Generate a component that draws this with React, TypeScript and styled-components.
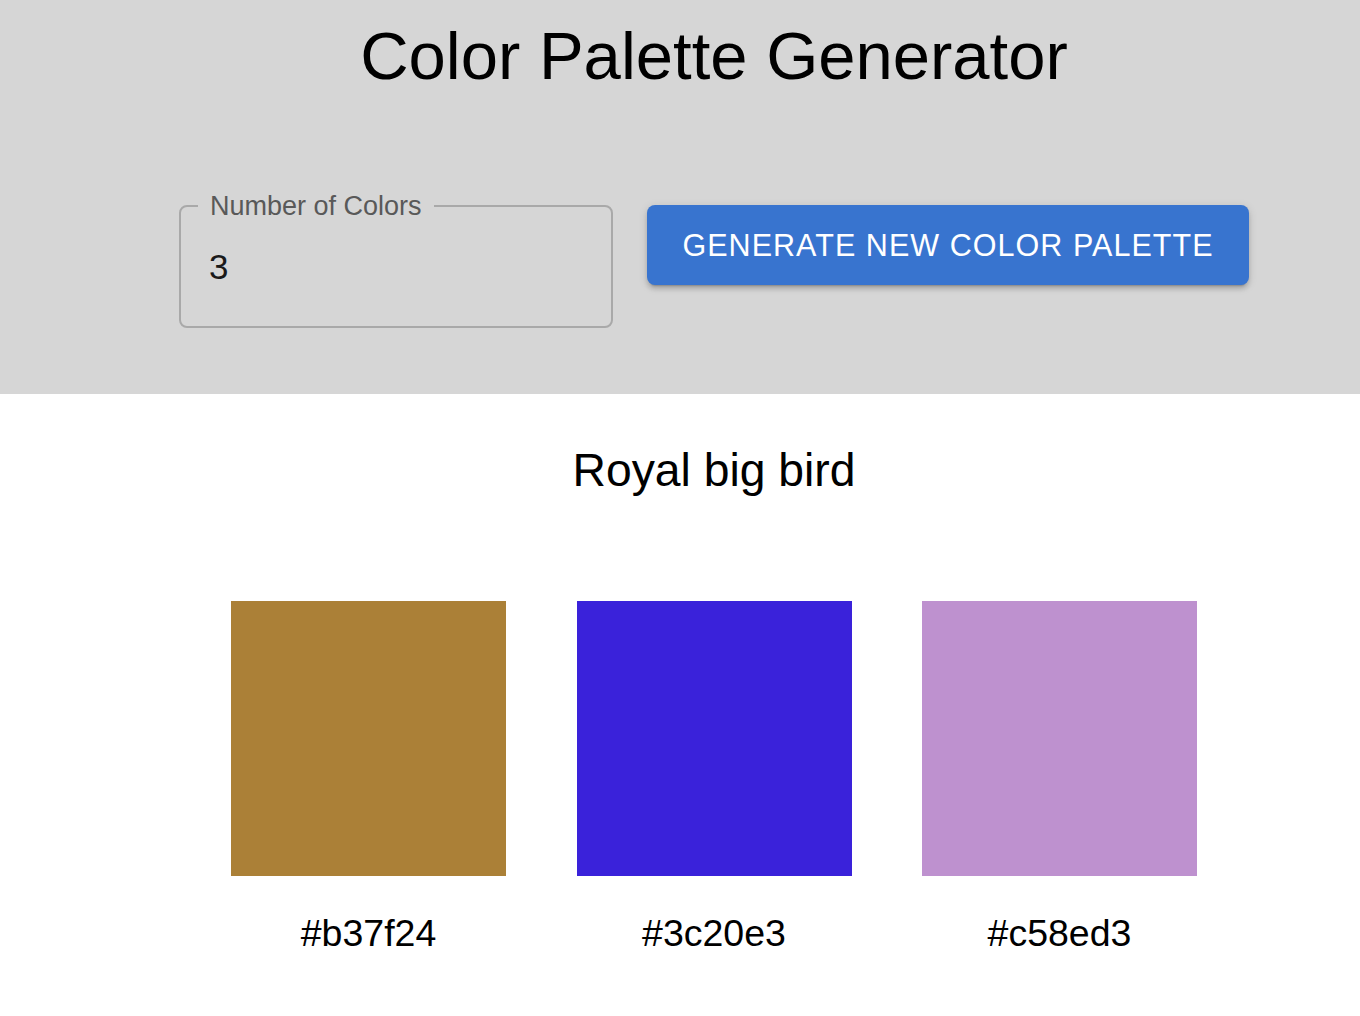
import React from "react";
import styled, { createGlobalStyle } from "styled-components";

const Global = createGlobalStyle`
  html, body { margin: 0; padding: 0; background: #ffffff; }
  body { font-family: "Liberation Sans", Arial, Helvetica, sans-serif; color: #000; }
`;

const Header = styled.header`
  background: #d6d6d6;
  padding: 16px 0 66px 68px;
  display: flex;
  flex-direction: column;
  align-items: center;
`;

const Title = styled.h1`
  margin: 0;
  font-size: 67px;
  line-height: 80px;
  font-weight: 400;
  color: #000;
`;

const Controls = styled.div`
  margin-top: 96px;
  display: flex;
  align-items: flex-start;
  gap: 34px;
`;

const Field = styled.fieldset`
  margin: 0;
  width: 434px;
  box-sizing: border-box;
  padding: 0 17px 14px;
  border: 2px solid #a9a9a9;
  border-radius: 8px;
`;

const Legend = styled.legend`
  padding: 0 12px;
  font-size: 27px;
  line-height: 28px;
  color: #595959;
`;

const NumberInput = styled.input`
  display: block;
  width: 100%;
  box-sizing: border-box;
  height: 92px;
  border: none;
  outline: none;
  background: transparent;
  padding: 2px 0 0 11px;
  font-family: inherit;
  font-size: 35px;
  line-height: 90px;
  color: #1a1a1a;
`;

const GenerateButton = styled.button`
  margin-top: 13px;
  width: 602px;
  height: 80px;
  border: none;
  border-radius: 8px;
  background: #3874cf;
  color: #ffffff;
  font-family: inherit;
  font-size: 30.5px;
  letter-spacing: 1.05px;
  text-transform: uppercase;
  cursor: pointer;
  box-shadow: 0 5px 2px -4px rgba(0, 0, 0, 0.2), 0 4px 4px 0 rgba(0, 0, 0, 0.14),
    0 2px 10px 0 rgba(0, 0, 0, 0.12);
`;

const Palette = styled.main`
  padding: 49px 0 40px 68px;
  display: flex;
  flex-direction: column;
  align-items: center;
`;

const PaletteName = styled.h2`
  margin: 0;
  font-size: 46.3px;
  line-height: 54px;
  font-weight: 400;
`;

const Swatches = styled.div`
  margin-top: 104px;
  display: flex;
  gap: 70.5px;
`;

const SwatchColumn = styled.div`
  width: 275px;
  display: flex;
  flex-direction: column;
  align-items: center;
`;

const Swatch = styled.div<{ $color: string }>`
  width: 275px;
  height: 275px;
  background: ${(p) => p.$color};
`;

const HexLabel = styled.div`
  margin-top: 35px;
  font-size: 37.5px;
  line-height: 44px;
`;

const colors = [
  { hex: "#b37f24", shown: "#ab8037" },
  { hex: "#3c20e3", shown: "#3a22da" },
  { hex: "#c58ed3", shown: "#be91cf" },
];

export default function App() {
  const [count, setCount] = React.useState("3");
  return (
    <>
      <Global />
      <Header>
        <Title>Color Palette Generator</Title>
        <Controls>
          <Field>
            <Legend>Number of Colors</Legend>
            <NumberInput
              type="text"
              value={count}
              onChange={(e) => setCount(e.target.value)}
            />
          </Field>
          <GenerateButton>Generate new color palette</GenerateButton>
        </Controls>
      </Header>
      <Palette>
        <PaletteName>Royal big bird</PaletteName>
        <Swatches>
          {colors.map((c) => (
            <SwatchColumn key={c.hex}>
              <Swatch $color={c.shown} />
              <HexLabel>{c.hex}</HexLabel>
            </SwatchColumn>
          ))}
        </Swatches>
      </Palette>
    </>
  );
}
